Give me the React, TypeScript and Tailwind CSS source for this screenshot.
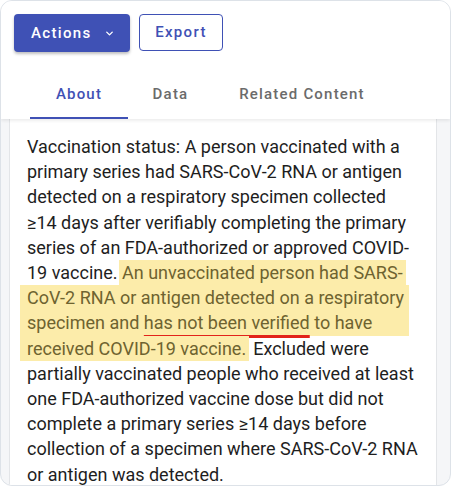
import React from "react";

const HL = "bg-[#fcecaa] text-[#6e6330]";

export default function App() {
  return (
    <div className="w-[454px] h-[487px] bg-white" style={{ fontFamily: "Roboto, 'Noto Sans', sans-serif" }}>
      <div className="w-[451px] h-[486px] border border-[#dde2e8] rounded-xl overflow-hidden bg-[#f5f6f8] flex flex-col">
        <div className="bg-white relative z-10 shadow-[0_2px_3px_rgba(0,0,0,0.07)]">
          <div className="flex items-start gap-[9px] pl-[13px] pt-[13px]">
            <button className="w-[116px] h-[38px] rounded-[4px] bg-[#3f51b5] text-white text-[15px] font-medium tracking-[0.09em] flex items-center pl-[17px] shadow-[0_2px_3px_rgba(0,0,0,0.25)]">
              <span>Actions</span>
              <svg className="ml-[12px]" width="11" height="11" viewBox="0 0 24 24" fill="none" stroke="white" strokeWidth="3" strokeLinecap="round" strokeLinejoin="round">
                <path d="M6 9l6 6 6-6" />
              </svg>
            </button>
            <button className="w-[84px] h-[37px] rounded-[4px] border-[1.5px] border-[#3f51b5] text-[#3f51b5] text-[15px] font-medium tracking-[0.09em] flex items-center justify-center">
              Export
            </button>
          </div>
          <div className="flex pl-[29px] mt-[26px] h-[41px]">
            <div className="w-[98px] flex flex-col items-center justify-between">
              <span className="text-[15px] font-medium tracking-[0.08em] text-[#3f51b5] mt-[5px]">About</span>
              <div className="h-[2.5px] w-full bg-[#3f51b5]" />
            </div>
            <div className="w-[85px] flex flex-col items-center">
              <span className="text-[15px] font-medium tracking-[0.08em] text-[#6b6b6b] mt-[5px]">Data</span>
            </div>
            <div className="w-[178px] flex flex-col items-center">
              <span className="text-[15px] font-medium tracking-[0.08em] text-[#6b6b6b] mt-[5px]">Related Content</span>
            </div>
          </div>
        </div>
        <div className="ml-[8px] w-[428px] flex-1 bg-white border-x border-[#e3e5e8] pl-[17px] pt-[15px]">
          <div className="text-[18px] leading-[25.2px] text-[#1e1e1e] whitespace-nowrap">
            <div>Vaccination status: A person vaccinated with a</div>
            <div>primary series had SARS-CoV-2 RNA or antigen</div>
            <div>detected on a respiratory specimen collected</div>
            <div>≥14 days after verifiably completing the primary</div>
            <div>series of an FDA-authorized or approved COVID-</div>
            <div>
              19 vaccine.{" "}
              <span className={`${HL} inline-block pl-[3px] pr-[3px] -ml-[3px]`}>An unvaccinated person had SARS-</span>
            </div>
            <div className={`${HL} -ml-[7px] pl-[7px] w-[389px]`}>CoV-2 RNA or antigen detected on a respiratory</div>
            <div className={`${HL} -ml-[7px] pl-[7px] w-[389px]`}>
              specimen and{" "}
              <span className="underline decoration-[#e2231a] decoration-[2.5px] underline-offset-[6px] [text-decoration-skip-ink:none]">has not been verified</span>{" "}
              to have
            </div>
            <div>
              <span className={`${HL} inline-block -ml-[7px] pl-[7px] pr-[3px]`}>received COVID-19 vaccine.</span>
              <span className="ml-[4px]">Excluded were</span>
            </div>
            <div>partially vaccinated people who received at least</div>
            <div>one FDA-authorized vaccine dose but did not</div>
            <div>complete a primary series ≥14 days before</div>
            <div>collection of a specimen where SARS-CoV-2 RNA</div>
            <div>or antigen was detected.</div>
          </div>
        </div>
      </div>
    </div>
  );
}
